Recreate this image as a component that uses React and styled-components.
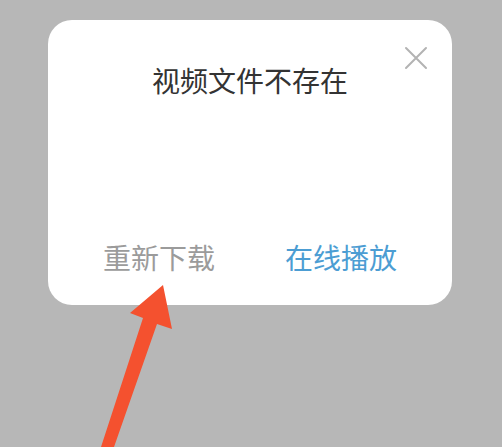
import React from "react";
import styled, { createGlobalStyle } from "styled-components";

const GlobalStyle = createGlobalStyle`
  html, body {
    margin: 0;
    padding: 0;
    background: #b7b7b7;
  }
  body {
    font-family: "Noto Sans CJK SC", "Noto Sans", sans-serif;
  }
`;

const Screen = styled.div`
    position: relative;
    width: 502px;
    height: 447px;
    overflow: hidden;
    padding: 20px 50px 0 48px;
    box-sizing: border-box;
`;

const Dialog = styled.div`
    position: relative;
    width: 404px;
    height: 285px;
    background: #ffffff;
    border-radius: 24px;
    display: flex;
    flex-direction: column;
    align-items: center;
    box-sizing: border-box;
    padding: 44px 20px 0;
`;

const Title = styled.h2`
    margin: 0;
    font-size: 28px;
    line-height: 32px;
    font-weight: 400;
    color: #333333;
    letter-spacing: 0;
`;

const Close = styled.button`
    position: absolute;
    top: 26px;
    right: 24px;
    width: 24px;
    height: 24px;
    padding: 0;
    border: none;
    background: transparent;
    cursor: pointer;
`;

const Body = styled.div`
    flex: 1;
    width: 100%;
`;

const Actions = styled.div`
    display: grid;
    grid-template-columns: 1fr 1fr;
    width: 100%;
    height: 34px;
    margin-bottom: 31px;
`;

const Action = styled.button`
    border: none;
    background: transparent;
    padding: 0;
    font-family: inherit;
    font-size: 28px;
    line-height: 34px;
    color: ${props => props.primary ? "#4c9dd3" : "#9b9b9b"};
    cursor: pointer;
`;

const Pointer = styled.svg`
    position: absolute;
    left: 0;
    top: 0;
    pointer-events: none;
`;

const App = () => {
    return (
        <>
            <GlobalStyle />
            <Screen>
                <Dialog>
                    <Close aria-label="关闭">
                        <svg width="24" height="24" viewBox="0 0 24 24">
                            <path d="M2 2 L22 22 M22 2 L2 22" stroke="#b3b3b3" strokeWidth="2" strokeLinecap="round" />
                        </svg>
                    </Close>
                    <Title>视频文件不存在</Title>
                    <Body />
                    <Actions>
                        <Action>重新下载</Action>
                        <Action primary>在线播放</Action>
                    </Actions>
                </Dialog>
                {/* red hint arrow pointing at the download button */}
                <Pointer width="502" height="447" viewBox="0 0 502 447">
                    <polygon
                        points="163,285 172,329 157,324 114,447 101,447 143,318 130,313"
                        fill="#f4512f"
                    />
                </Pointer>
            </Screen>
        </>
    );
};

export default App;
